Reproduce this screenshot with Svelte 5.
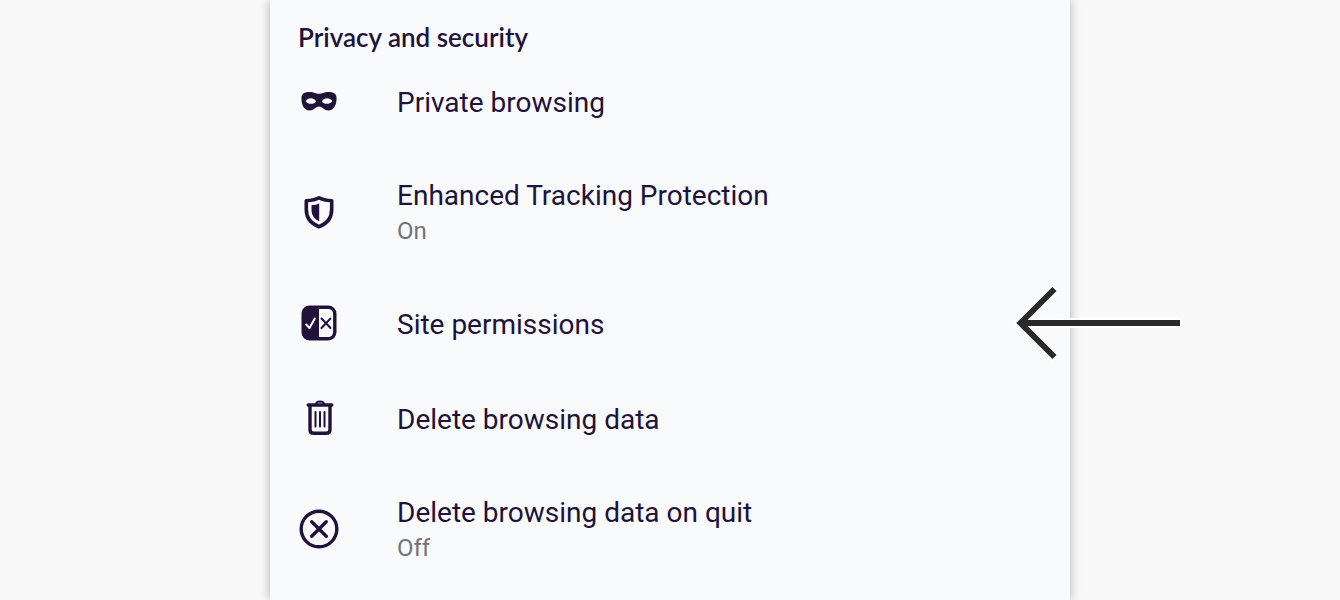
<script lang="ts">
	type Setting = {
		icon: 'mask' | 'shield' | 'permissions' | 'trash' | 'quit';
		title: string;
		summary?: string;
		pointedAt?: boolean;
	}

	const settings: Setting[] = [
		{ icon: 'mask', title: 'Private browsing' },
		{ icon: 'shield', title: 'Enhanced Tracking Protection', summary: 'On' },
		{ icon: 'permissions', title: 'Site permissions', pointedAt: true },
		{ icon: 'trash', title: 'Delete browsing data' },
		{ icon: 'quit', title: 'Delete browsing data on quit', summary: 'Off' },
	];
</script>

<main class="panel">
	<h2>Privacy and security</h2>

	<ul>
		{#each settings as setting}
			<li>
				<button type="button" class="setting">
					<svg class="icon" viewBox="0 0 40 40" aria-hidden="true">
						{#if setting.icon === 'mask'}
							<path fill="currentColor" fill-rule="evenodd" d="M2.500 16C3 12 6.500 11 10.500 11c4.500 0 6.500 1.800 9.500 1.800S25 11 29.500 11c4 0 7.500 1 8 5 .5 6.500-2 13.500-8 13.500-4.500 0-6-4-9.500-4S15 29.500 10.500 29.500c-6 0-8.500-7-8-13.500Z M6.500 20.300c1.700 1.900 3.500 2.500 5.700 2.500 2.200 0 4-.8 4.900-2.300-1.100-2.100-3-3.200-5.300-3.200-2.200 0-4 1.100-5.300 3Z M33.500 20.300c-1.700 1.900-3.500 2.500-5.700 2.500-2.200 0-4-.8-4.900-2.300 1.100-2.100 3-3.200 5.300-3.200 2.200 0 4 1.100 5.300 3Z" />
						{:else if setting.icon === 'shield'}
							<path class="line" stroke-width="3.600" d="M20 5.800c3.500 2 7.500 2.700 12.700 3v8.700c0 9-4.700 14.200-12.700 17.300-8-3.100-12.700-8.300-12.700-17.300V8.800C12.500 8.500 16.500 7.800 20 5.800Z" />
							<path fill="currentColor" d="M20.200 11.500v17.800c-5.200-2.500-7.700-6.200-7.700-12V13.200c3-.2 5.500-.7 7.700-1.700Z" />
						{:else if setting.icon === 'permissions'}
							<rect class="line" x="4.200" y="4.200" width="31.600" height="31.600" rx="6.500" stroke-width="3.400" />
							<path fill="currentColor" d="M20 3v34H10c-4 0-7-3-7-7V10c0-4 3-7 7-7Z" />
							<path class="line tick" stroke-width="2" d="m7.200 21.500 3.300 3.500 5.300-9.500" />
							<path class="line" stroke-width="2" d="m22.500 15.500 9 9.500m0-9.500-9 9.500" />
						{:else if setting.icon === 'trash'}
							<path class="line" stroke-width="3.400" d="M9.200 7h23.600M11 8v23.500c0 2.500 1.200 3.800 3.700 3.800h12.600c2.500 0 3.700-1.300 3.700-3.800V8" />
							<path class="line" stroke-width="2" d="M17 6.500c0-4 8-4 8 0M16.500 14v14.500M21 14v14.500M25.500 14v14.500" />
						{:else}
							<circle class="line" cx="20" cy="20" r="17.800" stroke-width="3.400" />
							<path class="line" stroke-width="3.400" d="m12.700 12.700 14.600 14.600m0-14.600L12.700 27.300" />
						{/if}
					</svg>

					<span class="text">
						<span class="title">{setting.title}</span>
						{#if setting.summary}
							<span class="summary">{setting.summary}</span>
						{/if}
					</span>
				</button>

				{#if setting.pointedAt}
					<svg class="arrow" viewBox="0 0 170 80" aria-hidden="true">
						<path class="halo" d="M6 40h161M41 5 6 40l35 35" />
						<path d="M7 40h158M39.500 6l-34 34 34 34" />
					</svg>
				{/if}
			</li>
		{/each}
	</ul>
</main>

<style>
	:global(body) {
		background: #f9f9f9;
	}

	.panel {
		box-sizing: border-box;
		max-width: 800px;
		min-height: 100vh;
		margin: 0 auto;
		padding-top: 20px;
		background: #f9fafc;
		box-shadow: 0 0 10px rgba(0, 0, 0, 0.3);
		color: #20123a;
		font-family: Roboto, "Liberation Sans", sans-serif;
	}

	h2 {
		margin: 0;
		padding: 0 28px;
		font-family: Lato, "Open Sans", sans-serif;
		font-size: 26px;
		font-weight: 600;
		line-height: 35px;
	}

	ul {
		margin: 0;
		padding: 0;
		list-style: none;
	}

	li {
		position: relative;
	}

	.setting {
		display: flex;
		align-items: center;
		gap: 58px;
		box-sizing: border-box;
		width: 100%;
		min-height: 95px;
		padding: 28px 29px;
		border: 0;
		background: none;
		color: inherit;
		font: inherit;
		text-align: left;
		cursor: pointer;
	}

	/* pulled up so the icons sit slightly above the middle of the text */
	.icon {
		flex: none;
		width: 40px;
		height: 40px;
		margin-top: -4px;
	}

	.line {
		fill: none;
		stroke: currentColor;
		stroke-linecap: round;
		stroke-linejoin: round;
	}

	.tick {
		stroke: #fff;
	}

	.text {
		display: flex;
		flex-direction: column;
	}

	.title {
		font-size: 28px;
		line-height: 36px;
	}

	.summary {
		color: #737378;
		font-size: 24px;
		line-height: 35px;
	}

	.arrow {
		position: absolute;
		top: 6px;
		right: -115px;
		width: 170px;
		height: 80px;
		fill: none;
		stroke: #2a2a2a;
		stroke-width: 6;
		pointer-events: none;
	}

	.halo {
		stroke: #fff;
		stroke-width: 10;
	}
</style>
